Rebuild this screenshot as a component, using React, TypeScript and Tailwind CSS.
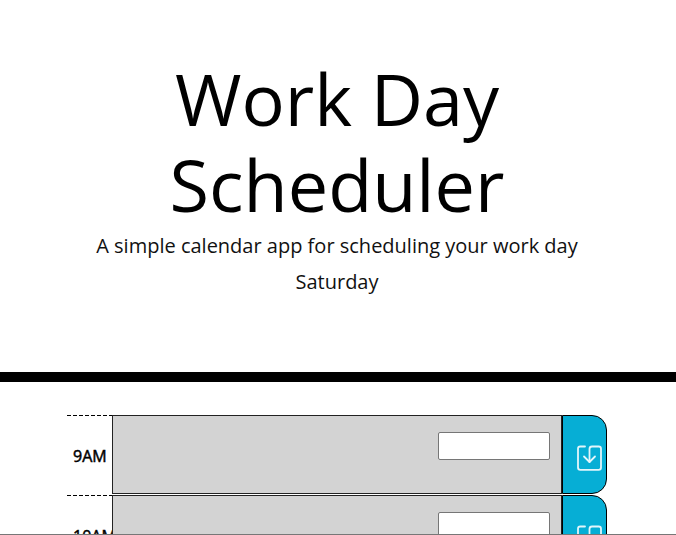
function SaveIcon() {
  return (
    <svg viewBox="0 0 25 26" className="h-[26px] w-[25px]" fill="none" stroke="#e3f6fb" strokeWidth="1.8" strokeLinecap="round" strokeLinejoin="round">
      <path d="M8 1.5H3.3Q1 1.5 1 3.8V22.5Q1 24.8 3.3 24.8H21.7Q24 24.8 24 22.5V3.8Q24 1.5 21.7 1.5H15Q12.5 1.5 12.5 4V17" />
      <path d="M7 11.5L12.5 17L18 11.5" />
    </svg>
  );
}

function TimeBlock({ hour }: { hour: string }) {
  return (
    <div className="flex h-20 shrink-0">
      <div className="h-[79px] w-[45px] shrink-0">
        <svg className="block h-px w-[45px]" shapeRendering="crispEdges">
          <path d="M0 .5H45" stroke="#000" strokeDasharray="4 2" />
        </svg>
        <div className="pl-1.5 pt-7 text-base leading-6 [-webkit-text-stroke:0.5px_black]">{hour}</div>
      </div>
      <div className="flex h-[79px] w-[450px] shrink-0 justify-end border border-[#222] bg-[#d3d3d3] pr-[11px] pt-4">
        <input aria-label={hour} className="h-7 w-28 rounded-[2px] border border-[#767676] bg-white outline-none" />
      </div>
      <button aria-label="Save" className="h-[79px] w-[45px] shrink-0 rounded-r-[15px] border border-black bg-[#06aed5] pl-[14px] pt-1.5">
        <SaveIcon />
      </button>
    </div>
  );
}

export default function App() {
  return (
    <div className="flex h-[535px] w-[676px] flex-col overflow-hidden border-b border-[#777] bg-white font-['Open_Sans',sans-serif] text-black">
      <header className="h-[382px] shrink-0 border-b-10 border-black pr-0.5 pt-[55px] text-center">
        <h1 className="mx-auto w-[482px] text-[72px] font-normal leading-[86px]">Work Day Scheduler</h1>
        <p className="mt-1 text-xl font-normal leading-[30px] text-[#111]">A simple calendar app for scheduling your work day</p>
        <p className="mt-1.5 text-xl font-normal leading-[30px] text-[#111]">Saturday</p>
      </header>
      <main className="flex flex-col pl-[67px] pt-[33px]">
        <TimeBlock hour="9AM" />
        <TimeBlock hour="10AM" />
      </main>
    </div>
  );
}
